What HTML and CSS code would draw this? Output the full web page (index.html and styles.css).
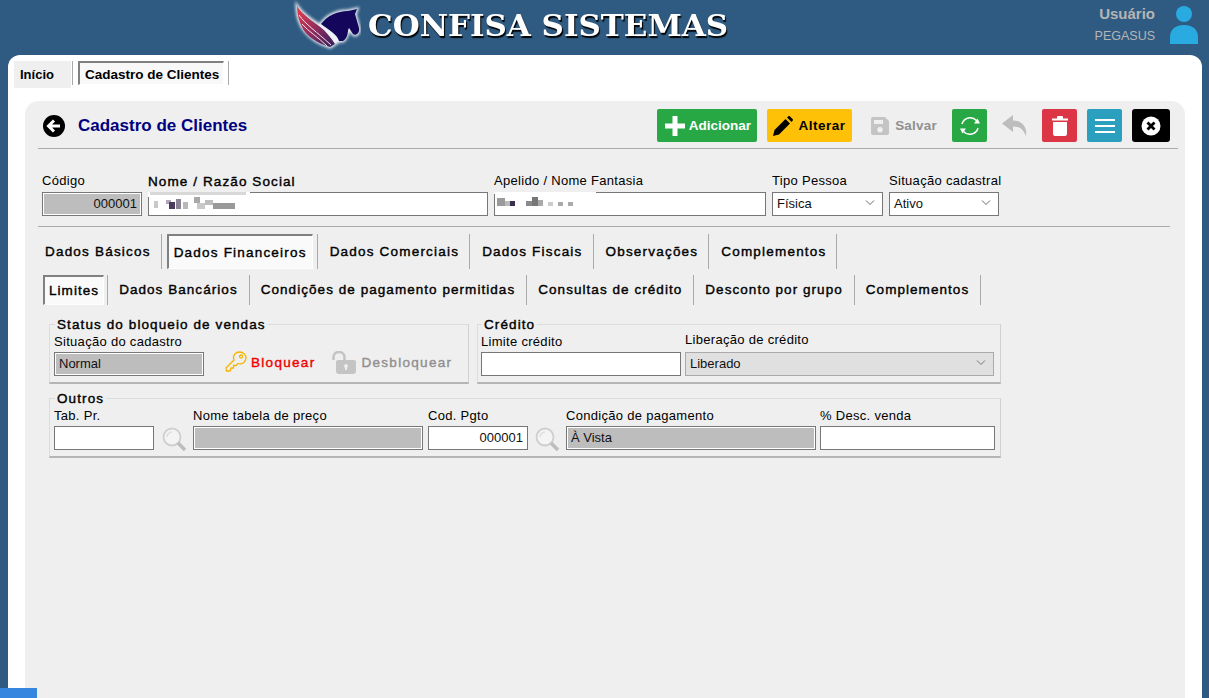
FILE: index.html
```html
<!DOCTYPE html>
<html lang="pt-BR">
<head>
    <meta charset="UTF-8">
    <title>Cadastro de Clientes</title>
    <link rel="stylesheet" href="styles.css">
</head>
<body>

    <!-- Topo -->
    <header class="topo">
        <svg class="logo" width="68" height="52" viewBox="0 0 68 52">
            <defs>
                <linearGradient id="asa" x1="0" y1="0" x2="1" y2="1">
                    <stop offset="0" stop-color="#ea3f4e"/>
                    <stop offset="0.55" stop-color="#8a2b5e"/>
                    <stop offset="1" stop-color="#2f2060"/>
                </linearGradient>
                <filter id="brilho" x="-20%" y="-20%" width="140%" height="140%">
                    <feGaussianBlur stdDeviation="1.800"/>
                </filter>
            </defs>
            <path filter="url(#brilho)" fill="#eef2f6" stroke="#eef2f6" stroke-width="3" d="M4 6 C4 20 10 38 37 47 L46 41 L50 41 C55 37 55 31 56 28 L60 34 C62 36 67 34 66 28 L62 14 L64 9 L55 11 C44 11 34 16 28 24 L26 25 C18 20 9 14 4 6Z"/>
            <path d="M4 6 C9 14 18 20 26 26 C33 31 38 38 42 44 L37 47 C24 43 15 37 10 29 C6 22 4 14 4 6Z" fill="url(#asa)"/>
            <path d="M6 15 C12 24 24 32 38 45 M9 24 C16 32 25 37 34 46" stroke="#f6dfe4" stroke-width="1" fill="none"/>
            <path d="M28 24 C34 16 44 11 55 11 L64 9 L62 14 L66 28 C67 34 62 36 60 34 L56 28 C54 31 56 37 50 41 L46 41 C44 34 36 30 28 24Z" fill="#14065a"/>
        </svg>
        <h1 class="marca">CONFISA SISTEMAS</h1>
        <div class="usuario">
            <strong>Usuário</strong>
            <span>PEGASUS</span>
        </div>
        <svg class="avatar" width="30" height="40" viewBox="0 0 30 40">
            <circle cx="15" cy="9" r="8" fill="#29abe2"/>
            <path d="M1 39 V32 C1 24 7 20 15 20 C23 20 29 24 29 32 V39Z" fill="#29abe2"/>
        </svg>
    </header>

    <div class="card">
        <!-- Abas principais -->
        <nav class="abas-topo">
            <a class="aba-inicio">Início</a>
            <a class="aba-cadastro"><span>Cadastro de Clientes</span></a>
        </nav>

        <main class="painel">
            <!-- Barra de ferramentas -->
            <div class="toolbar">
                <svg class="voltar" width="22" height="22" viewBox="0 0 22 22">
                    <circle cx="11" cy="11" r="11" fill="#000"/>
                    <path d="M17 11 H6 M11 5.500 L5.500 11 L11 16.500" stroke="#fff" stroke-width="3" fill="none"/>
                </svg>
                <h2 class="titulo">Cadastro de Clientes</h2>

                <button class="btn verde btn-adicionar">
                    <svg width="22" height="22" viewBox="0 0 22 22"><path d="M8.500 1 H13.500 V8.500 H21 V13.500 H13.500 V21 H8.500 V13.500 H1 V8.500 H8.500Z" fill="#fff"/></svg>
                    Adicionar
                </button>
                <button class="btn amarelo btn-alterar">
                    <svg width="20" height="20" viewBox="0 0 20 20"><path d="M0 20 L1.500 14 L12.500 3 L17 7.500 L6 18.500Z M14 1.500 L15.200 .4 C15.800 -.1 16.500 -.1 17 .4 L19.600 3 C20.100 3.500 20.100 4.200 19.600 4.800 L18.500 6Z" fill="#000"/></svg>
                    Alterar
                </button>
                <button class="btn btn-salvar">
                    <svg width="18" height="18" viewBox="0 0 18 18"><path d="M2 0 H14 L18 4 V16 a2 2 0 0 1 -2 2 H2 a2 2 0 0 1 -2 -2 V2 a2 2 0 0 1 2 -2Z M3 3 V7 H12 V3Z M9 10 a2.800 2.800 0 1 0 .01 0Z" fill="#c4c4c4" fill-rule="evenodd"/></svg>
                    Salvar
                </button>
                <button class="btn verde btn-icone btn-atualizar">
                    <svg width="22" height="22" viewBox="0 0 22 22" fill="none" stroke="#fff" stroke-width="1.500">
                        <path d="M3 9 A8.500 8.500 0 0 1 17.500 5.500"/>
                        <path d="M19 13 A8.500 8.500 0 0 1 4.500 16.500"/>
                        <path d="M15 8.500 H21 L18.500 3.500Z M7 13.500 H1 L3.500 18.500Z" fill="#fff" stroke="none"/>
                    </svg>
                </button>
                <svg class="desfazer" width="26" height="22" viewBox="0 0 26 22"><path d="M11 0 L0 8.500 L11 17 V11.500 C17 11.500 21 13.500 24 21 C25.500 12 20 5.500 11 5.500Z" fill="#bdbdbd"/></svg>
                <button class="btn vermelho btn-icone">
                    <svg width="16" height="20" viewBox="0 0 16 20"><path d="M0 2.500 H5 V1 a1 1 0 0 1 1 -1 H10 a1 1 0 0 1 1 1 V2.500 H16 V4.500 H0Z M1 6 H15 V18 a2 2 0 0 1 -2 2 H3 a2 2 0 0 1 -2 -2Z" fill="#fff"/></svg>
                </button>
                <button class="btn azul btn-icone">
                    <svg width="20" height="14" viewBox="0 0 20 14"><path d="M0 0 H20 V2 H0Z M0 6 H20 V8 H0Z M0 12 H20 V14 H0Z" fill="#fff"/></svg>
                </button>
                <button class="btn preto btn-fechar">
                    <svg width="20" height="20" viewBox="0 0 20 20">
                        <circle cx="10" cy="10" r="9.500" fill="#fff"/>
                        <path d="M6.500 6.500 L13.500 13.500 M13.500 6.500 L6.500 13.500" stroke="#000" stroke-width="2.800"/>
                    </svg>
                </button>
            </div>
            <hr class="linha linha-toolbar">

            <!-- Identificação -->
            <section class="identificacao">
                <div class="campo w-codigo">
                    <label>Código</label>
                    <input class="entrada inativa direita" value="000001">
                </div>
                <div class="campo w-nome">
                    <label class="forte">Nome / Razão Social</label>
                    <div class="entrada oculto">
                        <svg width="102" height="24" viewBox="0 0 102 24">
                            <rect width="102" height="5" fill="#fff"/>
                            <rect x="2" width="96" height="3" fill="#d8d8d8"/>
                            <rect x="6" y="9" width="4" height="7" fill="#c9c9c9"/>
                            <rect x="18" y="8" width="5" height="4" fill="#b0a8b8"/>
                            <rect x="21" y="10" width="6" height="7" fill="#4a3a5c"/>
                            <rect x="28" y="7" width="5" height="10" fill="#8b8494"/>
                            <rect x="35" y="10" width="5" height="7" fill="#b8b8b8"/>
                            <rect x="46" y="5" width="6" height="6" fill="#a8a8a8"/>
                            <rect x="49" y="11" width="8" height="6" fill="#c8c8c8"/>
                            <rect x="57" y="8" width="8" height="5" fill="#bdbdbd"/>
                            <rect x="65" y="11" width="22" height="6" fill="#999"/>
                        </svg>
                    </div>
                </div>
                <div class="campo w-apelido">
                    <label>Apelido / Nome Fantasia</label>
                    <div class="entrada oculto">
                        <svg width="102" height="24" viewBox="0 0 102 24">
                            <rect width="102" height="2" fill="#fff"/>
                            <rect x="3" y="6" width="8" height="8" fill="#9a9a9a"/>
                            <rect x="11" y="9" width="5" height="5" fill="#bbb"/>
                            <rect x="16" y="9" width="5" height="5" fill="#3c2f50"/>
                            <rect x="32" y="9" width="8" height="5" fill="#8a8a8a"/>
                            <rect x="38" y="5" width="6" height="9" fill="#777"/>
                            <rect x="44" y="8" width="5" height="6" fill="#aaa"/>
                            <rect x="54" y="10" width="5" height="4" fill="#ccc"/>
                            <rect x="64" y="10" width="5" height="4" fill="#aaa"/>
                            <rect x="74" y="10" width="5" height="4" fill="#aaa"/>
                        </svg>
                    </div>
                </div>
                <div class="campo w-tipo">
                    <label>Tipo Pessoa</label>
                    <div class="entrada selecao">
                        <span>Física</span>
                        <svg width="10" height="6" viewBox="0 0 10 6"><path d="M1 .5 L5 4.500 L9 .5" stroke="#666" fill="none"/></svg>
                    </div>
                </div>
                <div class="campo w-situacao">
                    <label>Situação cadastral</label>
                    <div class="entrada selecao">
                        <span>Ativo</span>
                        <svg width="10" height="6" viewBox="0 0 10 6"><path d="M1 .5 L5 4.500 L9 .5" stroke="#666" fill="none"/></svg>
                    </div>
                </div>
            </section>
            <hr class="linha linha-campos">

            <!-- Abas -->
            <nav class="abas abas-1">
                <a>Dados Básicos</a>
                <a class="ativa">Dados Financeiros</a>
                <a>Dados Comerciais</a>
                <a>Dados Fiscais</a>
                <a>Observações</a>
                <a>Complementos</a>
            </nav>
            <nav class="abas abas-2">
                <a class="ativa">Limites</a>
                <a>Dados Bancários</a>
                <a>Condições de pagamento permitidas</a>
                <a>Consultas de crédito</a>
                <a>Desconto por grupo</a>
                <a>Complementos</a>
            </nav>

            <!-- Limites -->
            <div class="grupos">
                <fieldset class="grupo g-status">
                    <legend>Status do bloqueio de vendas</legend>
                    <div class="campo w-normal">
                        <label>Situação do cadastro</label>
                        <input class="entrada inativa" value="Normal">
                    </div>
                    <a class="acao bloquear">
                        <svg width="22" height="22" viewBox="0 0 22 22" fill="none" stroke="#f7b500" stroke-width="1.300">
                            <path d="M1 17 L9 9 C7 4 11 1 14.500 1 C18.500 1 21 4 21 7 C21 11 17 14 13 12.500 L11 14.500 H8.500 V17 H6 L5 20 H1.500Z"/>
                            <circle cx="16" cy="5.500" r="1.500"/>
                        </svg>
                        Bloquear
                    </a>
                    <a class="acao desbloquear">
                        <svg width="24" height="23" viewBox="0 0 24 23">
                            <path d="M1.500 9 V6.500 C1.500 3 4 1 7 1 C10 1 12.500 3 12.500 6.500 V9" stroke="#c4c4c4" stroke-width="2.500" fill="none"/>
                            <path d="M6 9 H22 a2 2 0 0 1 2 2 V20 a3 3 0 0 1 -3 3 H7 a3 3 0 0 1 -3 -3 V11 a2 2 0 0 1 2 -2Z M14 13 a2 2 0 0 0 -1 3.700 V19 H15 V16.700 A2 2 0 0 0 14 13Z" fill="#c4c4c4" fill-rule="evenodd"/>
                        </svg>
                        Desbloquear
                    </a>
                </fieldset>

                <fieldset class="grupo g-credito">
                    <legend>Crédito</legend>
                    <div class="campo w-limite">
                        <label>Limite crédito</label>
                        <input class="entrada">
                    </div>
                    <div class="campo w-liberacao">
                        <label class="alto">Liberação de crédito</label>
                        <div class="entrada selecao desativada">
                            <span>Liberado</span>
                            <svg width="10" height="6" viewBox="0 0 10 6"><path d="M1 .5 L5 4.500 L9 .5" stroke="#777" fill="none"/></svg>
                        </div>
                    </div>
                </fieldset>

                <fieldset class="grupo g-outros">
                    <legend>Outros</legend>
                    <div class="campo w-tab">
                        <label>Tab. Pr.</label>
                        <input class="entrada">
                    </div>
                    <svg class="lupa" width="25" height="25" viewBox="0 0 25 25">
                        <circle cx="10" cy="10" r="8.500" fill="#f4f4f4" stroke="#cfcfcf" stroke-width="1.800"/>
                        <path d="M5 10 A5 5 0 0 1 10 5" stroke="#dedede" stroke-width="1.500" fill="none"/>
                        <path d="M16 16 L23 23" stroke="#bdbdbd" stroke-width="3.500"/>
                    </svg>
                    <div class="campo w-tabela">
                        <label>Nome tabela de preço</label>
                        <input class="entrada inativa">
                    </div>
                    <div class="campo w-cod">
                        <label>Cod. Pgto</label>
                        <input class="entrada direita" value="000001">
                    </div>
                    <svg class="lupa lupa-2" width="25" height="25" viewBox="0 0 25 25">
                        <circle cx="10" cy="10" r="8.500" fill="#f4f4f4" stroke="#cfcfcf" stroke-width="1.800"/>
                        <path d="M5 10 A5 5 0 0 1 10 5" stroke="#dedede" stroke-width="1.500" fill="none"/>
                        <path d="M16 16 L23 23" stroke="#bdbdbd" stroke-width="3.500"/>
                    </svg>
                    <div class="campo w-condicao">
                        <label>Condição de pagamento</label>
                        <input class="entrada inativa" value="À Vista">
                    </div>
                    <div class="campo w-desc">
                        <label>% Desc. venda</label>
                        <input class="entrada">
                    </div>
                </fieldset>
            </div>
        </main>
    </div>

    <div class="barra-canto"></div>

</body>
</html>
```

FILE: styles.css
```css
* {
    box-sizing: border-box;
}
html, body {
    height: 100%;
}
body {
    margin: 0;
    background-color: #2f5b82;
    font-family: "Liberation Sans", Arial, sans-serif;
    font-size: 13px;
    color: #000;
    overflow: hidden;
    display: flex;
    flex-direction: column;
}

/* Topo */
.topo {
    height: 55px;
    flex: none;
    display: flex;
    align-items: flex-start;
    padding-left: 293px;
}
.logo {
    flex: none;
}
.marca {
    margin: 9px 0 0 7px;
    font-family: "DejaVu Serif", serif;
    font-size: 29px;
    line-height: 34px;
    font-weight: bold;
    color: #fff;
    text-shadow: 1px 2px 1px #000;
    white-space: nowrap;
    transform: scaleX(1.068);
    transform-origin: left center;
}
.usuario {
    margin-left: auto;
    padding-top: 2px;
    text-align: right;
    color: #b5b5b5;
    font-size: 12.500px;
    line-height: 23px;
}
.usuario strong, .usuario span {
    display: block;
}
.usuario strong {
    font-size: 15px;
}
.avatar {
    margin: 5px 10px 0 14px;
    flex: none;
}

/* Card branco */
.card {
    flex: 1;
    min-height: 0;
    margin: 0 7px 0 8px;
    padding: 6px 17px 0;
    background-color: #fff;
    border-radius: 12px 12px 0 0;
    display: flex;
    flex-direction: column;
}
.abas-topo {
    height: 27px;
    margin-left: -11px;
    display: flex;
    flex: none;
}
.aba-inicio {
    width: 58px;
    padding: 6px 0 0 6px;
    background-color: #efefef;
    font-weight: bold;
    box-shadow: inset -1px 0 0 #fff;
}
.aba-cadastro {
    height: 24px;
    padding-left: 5px;
    padding-right: 4px;
    border-left: 1px solid #aaa;
    border-right: 1px solid #aaa;
    font-weight: bold;
}
.aba-cadastro span {
    display: block;
    height: 24px;
    width: 146px;
    padding: 4px 0 0 5px;
    background-color: #f8f8f8;
    border: 1px solid #fff;
    border-top: 2px solid #808080;
    border-left: 2px solid #808080;
    font-size: 13.500px;
    white-space: nowrap;
}

/* Painel */
.painel {
    flex: 1;
    margin-top: 13px;
    background-color: #efefef;
    border-radius: 14px 14px 0 0;
    padding: 8px 7px 0 13px;
}
.toolbar {
    height: 33px;
    display: flex;
    align-items: center;
    padding: 0 8px 0 5px;
}
.voltar {
    flex: none;
}
.titulo {
    margin: 0 auto 0 13px;
    color: #000080;
    font-size: 17px;
    font-weight: bold;
}
.btn {
    height: 33px;
    border: none;
    border-radius: 2px;
    padding: 0;
    display: flex;
    align-items: center;
    justify-content: center;
    font-family: inherit;
    font-size: 13.500px;
    font-weight: bold;
    background: none;
    flex: none;
}
.btn-adicionar {
    width: 100px;
    gap: 3px;
    padding-left: 1px;
    color: #fff;
}
.btn-alterar {
    width: 85px;
    margin-left: 10px;
    gap: 5px;
    letter-spacing: .5px;
    color: #000;
}
.btn-salvar {
    width: 70px;
    margin-left: 16px;
    gap: 6px;
    padding-left: 2px;
    letter-spacing: .2px;
    color: #909090;
}
.btn-icone {
    width: 35px;
}
.btn-atualizar {
    margin-left: 14px;
}
.desfazer {
    margin: 0 14px 0 15px;
    flex: none;
}
.verde { background-color: #28a745; }
.amarelo { background-color: #ffc107; }
.vermelho { background-color: #dc3545; }
.azul { background-color: #2a9fbe; margin-left: 10px; }
.preto { background-color: #000; margin-left: 10px; }
.btn-fechar {
    width: 38px;
    border-radius: 3px;
}
.linha {
    border: none;
    border-top: 1px solid #aaa;
    margin: 0;
}
.linha-toolbar {
    margin-top: 6px;
}
.linha-campos {
    margin-top: 10px;
    margin-right: 8px;
}

/* Campos */
.identificacao {
    display: flex;
    gap: 6px;
    margin: 24px 0 0 4px;
}
.campo label {
    display: block;
    height: 19px;
    line-height: 15px;
    white-space: nowrap;
    letter-spacing: .3px;
}
.campo label.forte,
.grupo legend,
.abas a,
.acao {
    font-size: 13.500px;
    -webkit-text-stroke: .4px;
    letter-spacing: 1.1px;
}
.campo label.forte {
    line-height: 17px;
}
.grupo .campo label {
    height: 18px;
}
.grupo .campo label.alto {
    height: 20px;
    margin-top: -2px;
}
.entrada {
    display: block;
    width: 100%;
    height: 24px;
    margin: 0;
    padding: 0 4px 2px;
    border: 1px solid #777;
    background-color: #fff;
    font-family: inherit;
    font-size: 13px;
    color: #111;
    border-radius: 0;
    outline: none;
}
.inativa {
    background-color: #bdbdbd;
    box-shadow: inset 0 0 0 1px #fff;
}
.direita {
    text-align: right;
}
.oculto {
    padding: 0;
}
.oculto svg {
    display: block;
    margin: -1px 0 0 -1px;
}
.selecao {
    display: flex;
    align-items: center;
    justify-content: space-between;
}
.selecao svg {
    margin-right: 3px;
}
.desativada {
    background-color: #e0e0e0;
    border-color: #aaa;
}
.w-codigo { width: 100px; }
.w-nome { width: 340px; }
.w-apelido { width: 272px; }
.w-tipo { width: 111px; }
.w-situacao { width: 110px; }
.w-normal { width: 150px; }
.w-limite { width: 200px; }
.w-liberacao { width: 309px; }
.w-tab { width: 100px; }
.w-tabela { width: 230px; }
.w-cod { width: 100px; }
.w-condicao { width: 250px; }
.w-desc { width: 175px; margin-left: -1px; }

/* Abas internas */
.abas {
    display: flex;
    margin-left: 5px;
}
.abas a {
    display: flex;
    align-items: center;
    padding: 0 10px 0 12px;
    border-right: 1px solid #aaa;
    white-space: nowrap;
}
.abas a.ativa {
    padding: 0 5px;
    background-color: #fafafa;
    border: 1px solid #fff;
    border-top: 2px solid #808080;
    border-left: 2px solid #808080;
    box-shadow: 4px 0 0 #efefef, 5px 0 0 #aaa;
    margin-right: 5px;
    margin-left: 5px;
}
.abas a:first-child {
    padding-left: 2px;
}
.abas-1 {
    height: 35px;
    margin-top: 7px;
}
.abas-1 a {
    letter-spacing: 1.2px;
}
.abas-2 {
    height: 30px;
    margin-top: 6px;
}
.abas-2 a {
    padding: 0 11px 2px;
    letter-spacing: 1.05px;
}
.abas-2 a.ativa {
    margin-left: 0;
    margin-right: 4px;
    padding: 0 4px;
    box-shadow: 3px 0 0 #efefef, 4px 0 0 #aaa;
}

/* Grupos */
.grupos {
    width: 952px;
    margin: 11px 0 0 11px;
    display: flex;
    flex-wrap: wrap;
    column-gap: 8px;
    row-gap: 6px;
}
.grupo {
    margin: 0;
    min-width: 0;
    height: 68px;
    padding: 1px 4px 0;
    display: flex;
    align-items: flex-start;
    border: 1px solid #dcdcdc;
    border-bottom: 2px solid #b5b5b5;
    border-right-color: #d0d0d0;
}
.grupo legend {
    margin-left: 1px;
    padding: 1px 2px;
    line-height: 15px;
}
.g-status { width: 420px; }
.g-credito { width: 524px; gap: 4px; padding-left: 3px; }
.g-outros { width: 952px; gap: 5px; }
.acao {
    display: flex;
    align-items: center;
    margin-top: 16px;
    height: 24px;
    letter-spacing: 1.3px;
}
.bloquear {
    margin-left: 21px;
    gap: 4px;
    color: #f00000;
}
.desbloquear {
    margin-left: 17px;
    gap: 5px;
    color: #909090;
}
.lupa {
    flex: none;
    margin: 19px 1px 0 3px;
}
.lupa-2 {
    margin-left: 2px;
}

.barra-canto {
    position: absolute;
    left: 0;
    bottom: 0;
    width: 37px;
    height: 10px;
    background-color: #3686e0;
}
```
